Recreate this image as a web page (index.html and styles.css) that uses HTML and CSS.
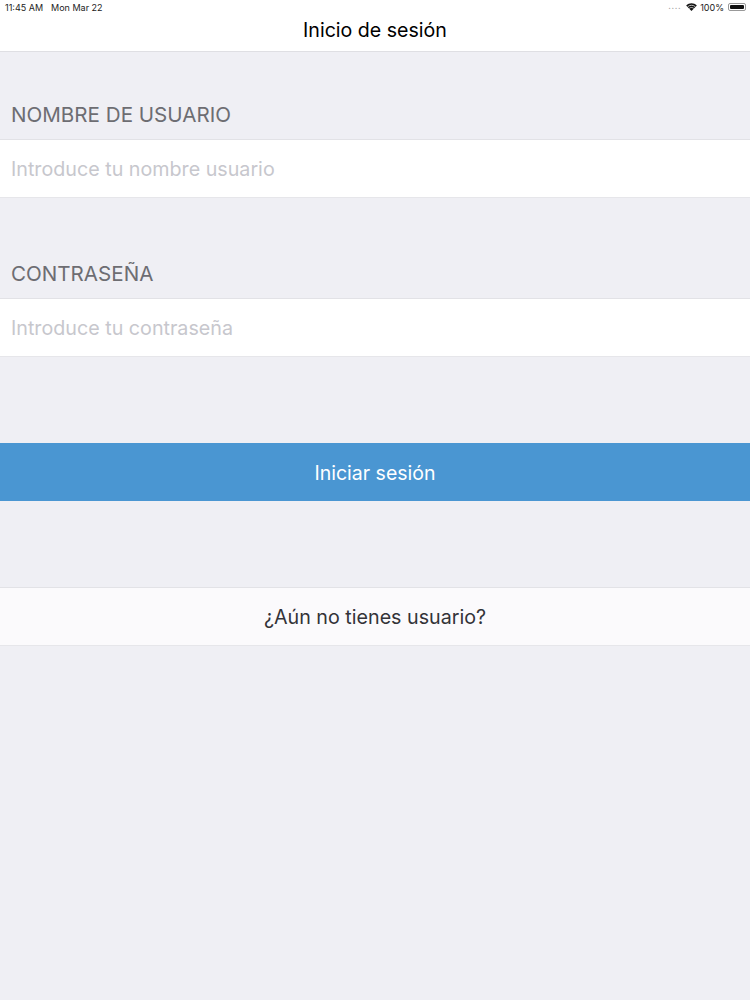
FILE: index.html
```html
<!DOCTYPE html>
<html lang="es">
<head>
<meta charset="utf-8">
<title>Inicio de sesión</title>
<link rel="stylesheet" href="styles.css">
</head>
<body>
<header class="top">
  <div class="status">
    <div class="status-left"><span>11:45 AM</span><span>Mon Mar 22</span></div>
    <div class="status-right">
      <span class="signal">....</span>
      <svg class="wifi" width="11" height="8" viewBox="0 0 12 9"><path d="M6 9 L0 2.8 C3.4 -0.6 8.6 -0.6 12 2.8 Z" fill="#111"/><path d="M1.7 4.2 C4.2 2 7.8 2 10.3 4.2" stroke="#fff" stroke-width=".8" fill="none"/><path d="M3.4 6 C4.9 4.8 7.1 4.8 8.6 6" stroke="#fff" stroke-width=".8" fill="none"/></svg>
      <span>100%</span>
      <span class="battery"><span class="battery-fill"></span></span>
    </div>
  </div>
  <h1 class="title">Inicio de sesión</h1>
</header>
<main>
  <section class="group group-user">
    <div class="label">NOMBRE DE USUARIO</div>
    <div class="row placeholder">Introduce tu nombre usuario</div>
  </section>
  <section class="group group-pass">
    <div class="label">CONTRASEÑA</div>
    <div class="row placeholder">Introduce tu contraseña</div>
  </section>
  <button class="submit" type="button">Iniciar sesión</button>
  <button class="register" type="button">¿Aún no tienes usuario?</button>
</main>
</body>
</html>
```
FILE: styles.css
```css
* { box-sizing: border-box; }
html, body { margin: 0; padding: 0; }
body {
  width: 750px;
  height: 1000px;
  overflow: hidden;
  background: #efeff4;
  font-family: Inter, "Liberation Sans", sans-serif;
}
.top {
  height: 52px;
  background: #fff;
  border-bottom: 1px solid #dfdfe3;
}
.status {
  height: 14px;
  padding: 0 4px 0 5px;
  display: flex;
  justify-content: space-between;
  align-items: center;
  font-size: 9px;
  color: #222;
}
.status-left { display: flex; gap: 8px; }
.status-right { display: flex; align-items: center; gap: 3px; }
.signal { color: #aaa; margin-right: 2px; letter-spacing: .6px; position: relative; top: -2px; }
.wifi { display: block; }
.battery {
  width: 18px;
  height: 8px;
  margin-left: 1px;
  padding: 1px;
  border: 1px solid #999;
  border-radius: 2px;
  display: block;
}
.battery-fill { display: block; height: 100%; background: #111; border-radius: 1px; }
.title {
  margin: 0;
  height: 32px;
  line-height: 32px;
  text-align: center;
  font-size: 19.6px;
  font-weight: 400;
  color: #000;
}
.group { display: flex; flex-direction: column; }
.group-user { padding-top: 47px; }
.group-pass { padding-top: 60px; }
.label {
  height: 40px;
  padding: 3px 0 0 11px;
  line-height: 26px;
  font-size: 20.6px;
  color: #6d6d72;
}
.row {
  height: 59px;
  padding-left: 11px;
  line-height: 59px;
  background: #fff;
  border-top: 1px solid #e2e2e6;
  border-bottom: 1px solid #e6e6ea;
  font-size: 19.7px;
}
.placeholder { color: #c7c7cd; }
.submit, .register {
  display: block;
  width: 100%;
  height: 59px;
  padding: 0;
  font: inherit;
  text-align: center;
}
.submit {
  margin-top: 86px;
  height: 58px;
  padding-top: 2px;
  border: 0;
  background: #4a96d2;
  color: #fff;
  font-size: 19.5px;
}
.register {
  margin-top: 86px;
  background: #fbfafc;
  border: 0;
  border-top: 1px solid #e2e2e6;
  border-bottom: 1px solid #e6e6ea;
  color: #333338;
  font-size: 19.7px;
}
```
